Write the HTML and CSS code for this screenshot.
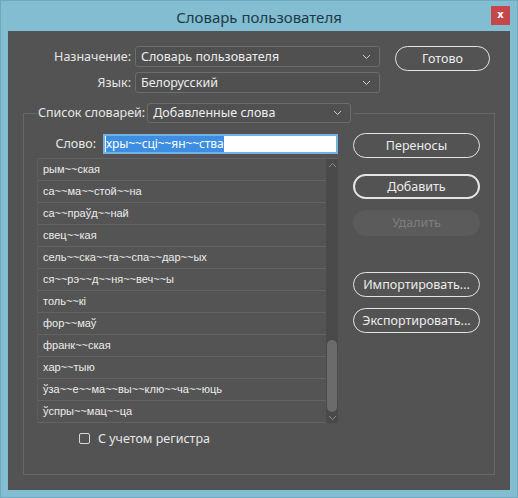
FILE: index.html
```html
<!DOCTYPE html>
<html lang="ru">
<head>
<meta charset="utf-8">
<title>Словарь пользователя</title>
<link rel="stylesheet" href="styles.css">
</head>
<body>
<div class="window">
  <div class="titlebar">
    <span class="title">Словарь пользователя</span>
    <span class="close">x</span>
  </div>
  <div class="panel">
    <div class="top">
      <div class="fields">
        <span class="label">Назначение:</span>
        <div class="select"><span>Словарь пользователя</span><svg class="chev" width="9" height="6" viewBox="0 0 9 6"><path d="M1 1 L4.5 4.5 L8 1" fill="none" stroke="#d0d0d0" stroke-width="1"/></svg></div>
        <span class="label">Язык:</span>
        <div class="select"><span>Белорусский</span><svg class="chev" width="9" height="6" viewBox="0 0 9 6"><path d="M1 1 L4.5 4.5 L8 1" fill="none" stroke="#d0d0d0" stroke-width="1"/></svg></div>
      </div>
      <button class="btn btn-done">Готово</button>
    </div>
    <fieldset class="group">
      <legend class="legend">
        <span class="label">Список словарей:</span>
        <div class="select select-dict"><span>Добавленные слова</span><svg class="chev" width="9" height="6" viewBox="0 0 9 6"><path d="M1 1 L4.5 4.5 L8 1" fill="none" stroke="#d0d0d0" stroke-width="1"/></svg></div>
      </legend>
      <div class="group-body">
        <div class="left">
          <div class="word-row">
            <span class="label word-label">Слово:</span>
            <div class="input"><span class="selected">хры~~сці~~ян~~ства</span></div>
          </div>
          <div class="list">
            <ul class="rows">
              <li>рым~~ская</li>
              <li>са~~ма~~стой~~на</li>
              <li>са~~праўд~~най</li>
              <li>свец~~кая</li>
              <li>сель~~ска~~га~~спа~~дар~~ых</li>
              <li>ся~~рэ~~д~~ня~~веч~~ы</li>
              <li>толь~~кі</li>
              <li>фор~~маў</li>
              <li>франк~~ская</li>
              <li>хар~~тыю</li>
              <li>ўза~~е~~ма~~вы~~клю~~ча~~юць</li>
              <li>ўспры~~мац~~ца</li>
            </ul>
            <div class="scrollbar">
              <svg class="arrow" width="9" height="6" viewBox="0 0 9 6"><path d="M1 5 L4.5 1.5 L8 5" fill="none" stroke="#8a8a8a" stroke-width="1"/></svg>
              <div class="track"><div class="thumb"></div></div>
              <svg class="arrow" width="9" height="6" viewBox="0 0 9 6"><path d="M1 1 L4.5 4.5 L8 1" fill="none" stroke="#8a8a8a" stroke-width="1"/></svg>
            </div>
          </div>
          <div class="check">
            <span class="box"></span>
            <span class="check-label">С учетом регистра</span>
          </div>
        </div>
        <div class="right">
          <button class="btn btn-hyph">Переносы</button>
          <button class="btn btn-add">Добавить</button>
          <button class="btn btn-del" disabled>Удалить</button>
          <button class="btn btn-imp">Импортировать...</button>
          <button class="btn btn-exp">Экспортировать...</button>
        </div>
      </div>
    </fieldset>
  </div>
</div>
</body>
</html>
```

FILE: styles.css
```css
* { box-sizing: border-box; }

html, body {
  margin: 0;
  padding: 0;
  width: 518px;
  height: 498px;
  overflow: hidden;
  background: #82bdd2;
  font-family: "Noto Sans", "Open Sans", sans-serif;
}

.window {
  width: 518px;
  height: 498px;
  background: #82bdd2;
  border: 1px solid #6ea9bf;
  display: flex;
  flex-direction: column;
}

.titlebar {
  height: 30px;
  display: flex;
  align-items: center;
  justify-content: center;
  position: relative;
}

.title {
  font-size: 15px;
  color: #1f3947;
  line-height: 20px;
  margin-top: 1px;
}

.close {
  position: absolute;
  top: 5px;
  right: 7px;
  width: 19px;
  height: 19px;
  background: #c7464a;
  color: #ffffff;
  font-family: "DejaVu Sans", sans-serif;
  font-weight: bold;
  font-size: 10px;
  line-height: 17px;
  text-align: center;
}

.panel {
  margin: 0 7px 7px 7px;
  height: 459px;
  background: #535353;
  color: #e6e6e6;
  font-size: 12.5px;
}

.label {
  color: #e6e6e6;
  font-size: 12.5px;
  line-height: 18px;
  white-space: nowrap;
}

.top {
  display: flex;
  align-items: flex-start;
  padding-top: 15px;
}

.fields {
  display: grid;
  grid-template-columns: 123px 245px;
  grid-auto-rows: 21px;
  column-gap: 4px;
  row-gap: 5px;
  align-items: center;
}

.fields .label { text-align: right; }

.select {
  height: 21px;
  border: 1px solid #6c6c6c;
  border-radius: 3px;
  background: #505050;
  display: flex;
  align-items: center;
  justify-content: space-between;
  padding: 0 8px 0 5px;
  font-size: 12.5px;
  color: #ececec;
  line-height: 18px;
}

.chev { display: block; }

.btn {
  font-family: "Noto Sans", "Open Sans", sans-serif;
  font-size: 12.5px;
  color: #ececec;
  background: transparent;
  border: 1px solid #e4e4e4;
  border-radius: 13px;
  height: 25px;
  padding: 0;
  line-height: 18px;
  display: flex;
  align-items: center;
  justify-content: center;
}

.btn-done {
  width: 95px;
  margin-left: 15px;
}

.group {
  margin: 10px 0 0 15px;
  width: 472px;
  border: 1px solid #676767;
  padding: 10px 13px 27px 13px;
  min-width: 0;
}

.legend {
  display: flex;
  align-items: center;
  padding: 0 3px 0 1px;
  height: 20px;
}

.legend .label { margin-right: 2px; }

.select-dict {
  width: 204px;
  height: 20px;
}

.group-body {
  display: flex;
  align-items: flex-start;
}

.left {
  width: 301px;
  display: flex;
  flex-direction: column;
}

.word-row {
  display: flex;
  align-items: center;
  margin-top: 1px;
  height: 20px;
}

.word-label {
  width: 59px;
  text-align: right;
  margin-right: 7px;
}

.input {
  width: 235px;
  height: 20px;
  background: #ffffff;
  border: 2px solid #72b3e4;
  display: flex;
  align-items: center;
  padding-left: 1px;
  overflow: hidden;
}

.selected {
  background: #3d8ee2;
  color: #ffffff;
  font-size: 12px;
  letter-spacing: -0.1px;
  line-height: 16px;
  white-space: nowrap;
}

.list {
  margin-top: 4px;
  height: 265px;
  display: flex;
  border-top: 1px solid #616161;
  border-left: 1px solid #5c5c5c;
  background: #545454;
}

.rows {
  list-style: none;
  margin: 0;
  padding: 0;
  flex: 1;
}

.rows li {
  height: 22px;
  border-bottom: 1px solid #636363;
  padding-left: 5px;
  font-family: "Liberation Sans", "DejaVu Sans", sans-serif;
  font-size: 11px;
  line-height: 21px;
  color: #ececec;
  white-space: nowrap;
}

.scrollbar {
  width: 12px;
  background: #4a4a4a;
  display: flex;
  flex-direction: column;
  align-items: center;
  padding: 3px 0 2px 0;
}

.arrow { display: block; flex: none; }

.track {
  flex: 1;
  width: 100%;
  display: flex;
  flex-direction: column;
  justify-content: flex-end;
  padding: 0 1px 3px 1px;
}

.thumb {
  height: 72px;
  background: #6b6b6b;
  border-radius: 5px;
}

.check {
  display: flex;
  align-items: center;
  margin-top: 7px;
  padding-left: 42px;
  height: 17px;
}

.box {
  width: 11px;
  height: 11px;
  border: 1px solid #d8d8d8;
  border-radius: 2px;
  margin-right: 8px;
}

.check-label {
  font-size: 12.5px;
  line-height: 17px;
  color: #e6e6e6;
}

.right {
  width: 127px;
  margin-left: 15px;
  display: flex;
  flex-direction: column;
}

.right .btn { width: 127px; }

.btn-add {
  margin-top: 16px;
  border-width: 2px;
}

.btn-del {
  margin-top: 11px;
  border: none;
  background: #5b5b5b;
  color: #7e7e7e;
  height: 26px;
}

.btn-imp { margin-top: 36px; }

.btn-exp { margin-top: 11px; }
```
